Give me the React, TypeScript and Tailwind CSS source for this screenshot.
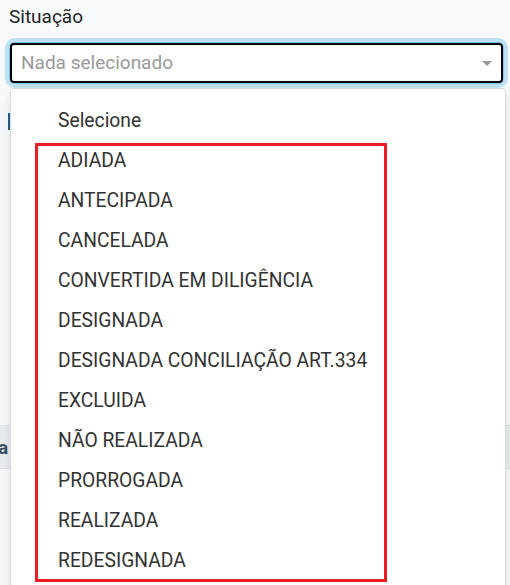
import React from "react";

const options = [
  "ADIADA",
  "ANTECIPADA",
  "CANCELADA",
  "CONVERTIDA EM DILIGÊNCIA",
  "DESIGNADA",
  "DESIGNADA CONCILIAÇÃO ART.334",
  "EXCLUIDA",
  "NÃO REALIZADA",
  "PRORROGADA",
  "REALIZADA",
  "REDESIGNADA",
];

const App = () => {
  return (
    <div
      className="relative w-[510px] h-[585px] overflow-hidden bg-[#f8f9fa]"
      style={{ fontFamily: "Roboto, 'Liberation Sans', sans-serif" }}
    >
      {/* form behind the menu */}
      <div className="pl-[9px] pt-[5px]">
        <label className="block text-[19px] leading-[24px] text-[#212529]">Situação</label>
        <div className="mt-[14px] mr-[7px] ml-[1px] rounded-[5px] shadow-[0_0_0_1px_#7cc3ef,0_0_0_5px_#bde0f2]">
          <div className="flex h-[40px] items-center justify-between rounded-[4px] border-2 border-black bg-white pl-[9px] pr-[9px]">
            <span className="text-[19px] text-[#999999]">Nada selecionado</span>
            <span className="h-0 w-0 border-x-[5px] border-t-[5px] border-x-transparent border-t-[#999999]" />
          </div>
        </div>
      </div>
      <div className="mt-[30px] h-[17px] w-[10px] border-r-2 border-[#1f5f8b]" />
      <div className="mt-[295px] flex h-[44px] items-center border-y border-[#dee2e6] bg-[#e9ecef]">
        <span className="-ml-[2px] text-[19px] font-bold leading-none text-[#3b4f63]">a</span>
      </div>

      {/* open dropdown menu */}
      <div className="absolute left-[10px] top-[88px] w-[496px] h-[510px] rounded-t-[4px] border border-[#d9d9d9] bg-white pt-[12px] shadow-[0_6px_12px_rgba(0,0,0,0.1)]">
        <ul className="text-[19.3px] text-[#333333]">
          <li className="h-[40px] leading-[40px] pl-[47px]">Selecione</li>
          {options.map((o) => (
            <li key={o} className="h-[40px] leading-[40px] pl-[47px]">
              {o}
            </li>
          ))}
        </ul>
      </div>

      {/* highlight annotation */}
      <div className="absolute left-[35px] top-[143px] w-[352px] h-[439px] border-[3px] border-[#ed1c24]" />
    </div>
  );
};

export default App;
